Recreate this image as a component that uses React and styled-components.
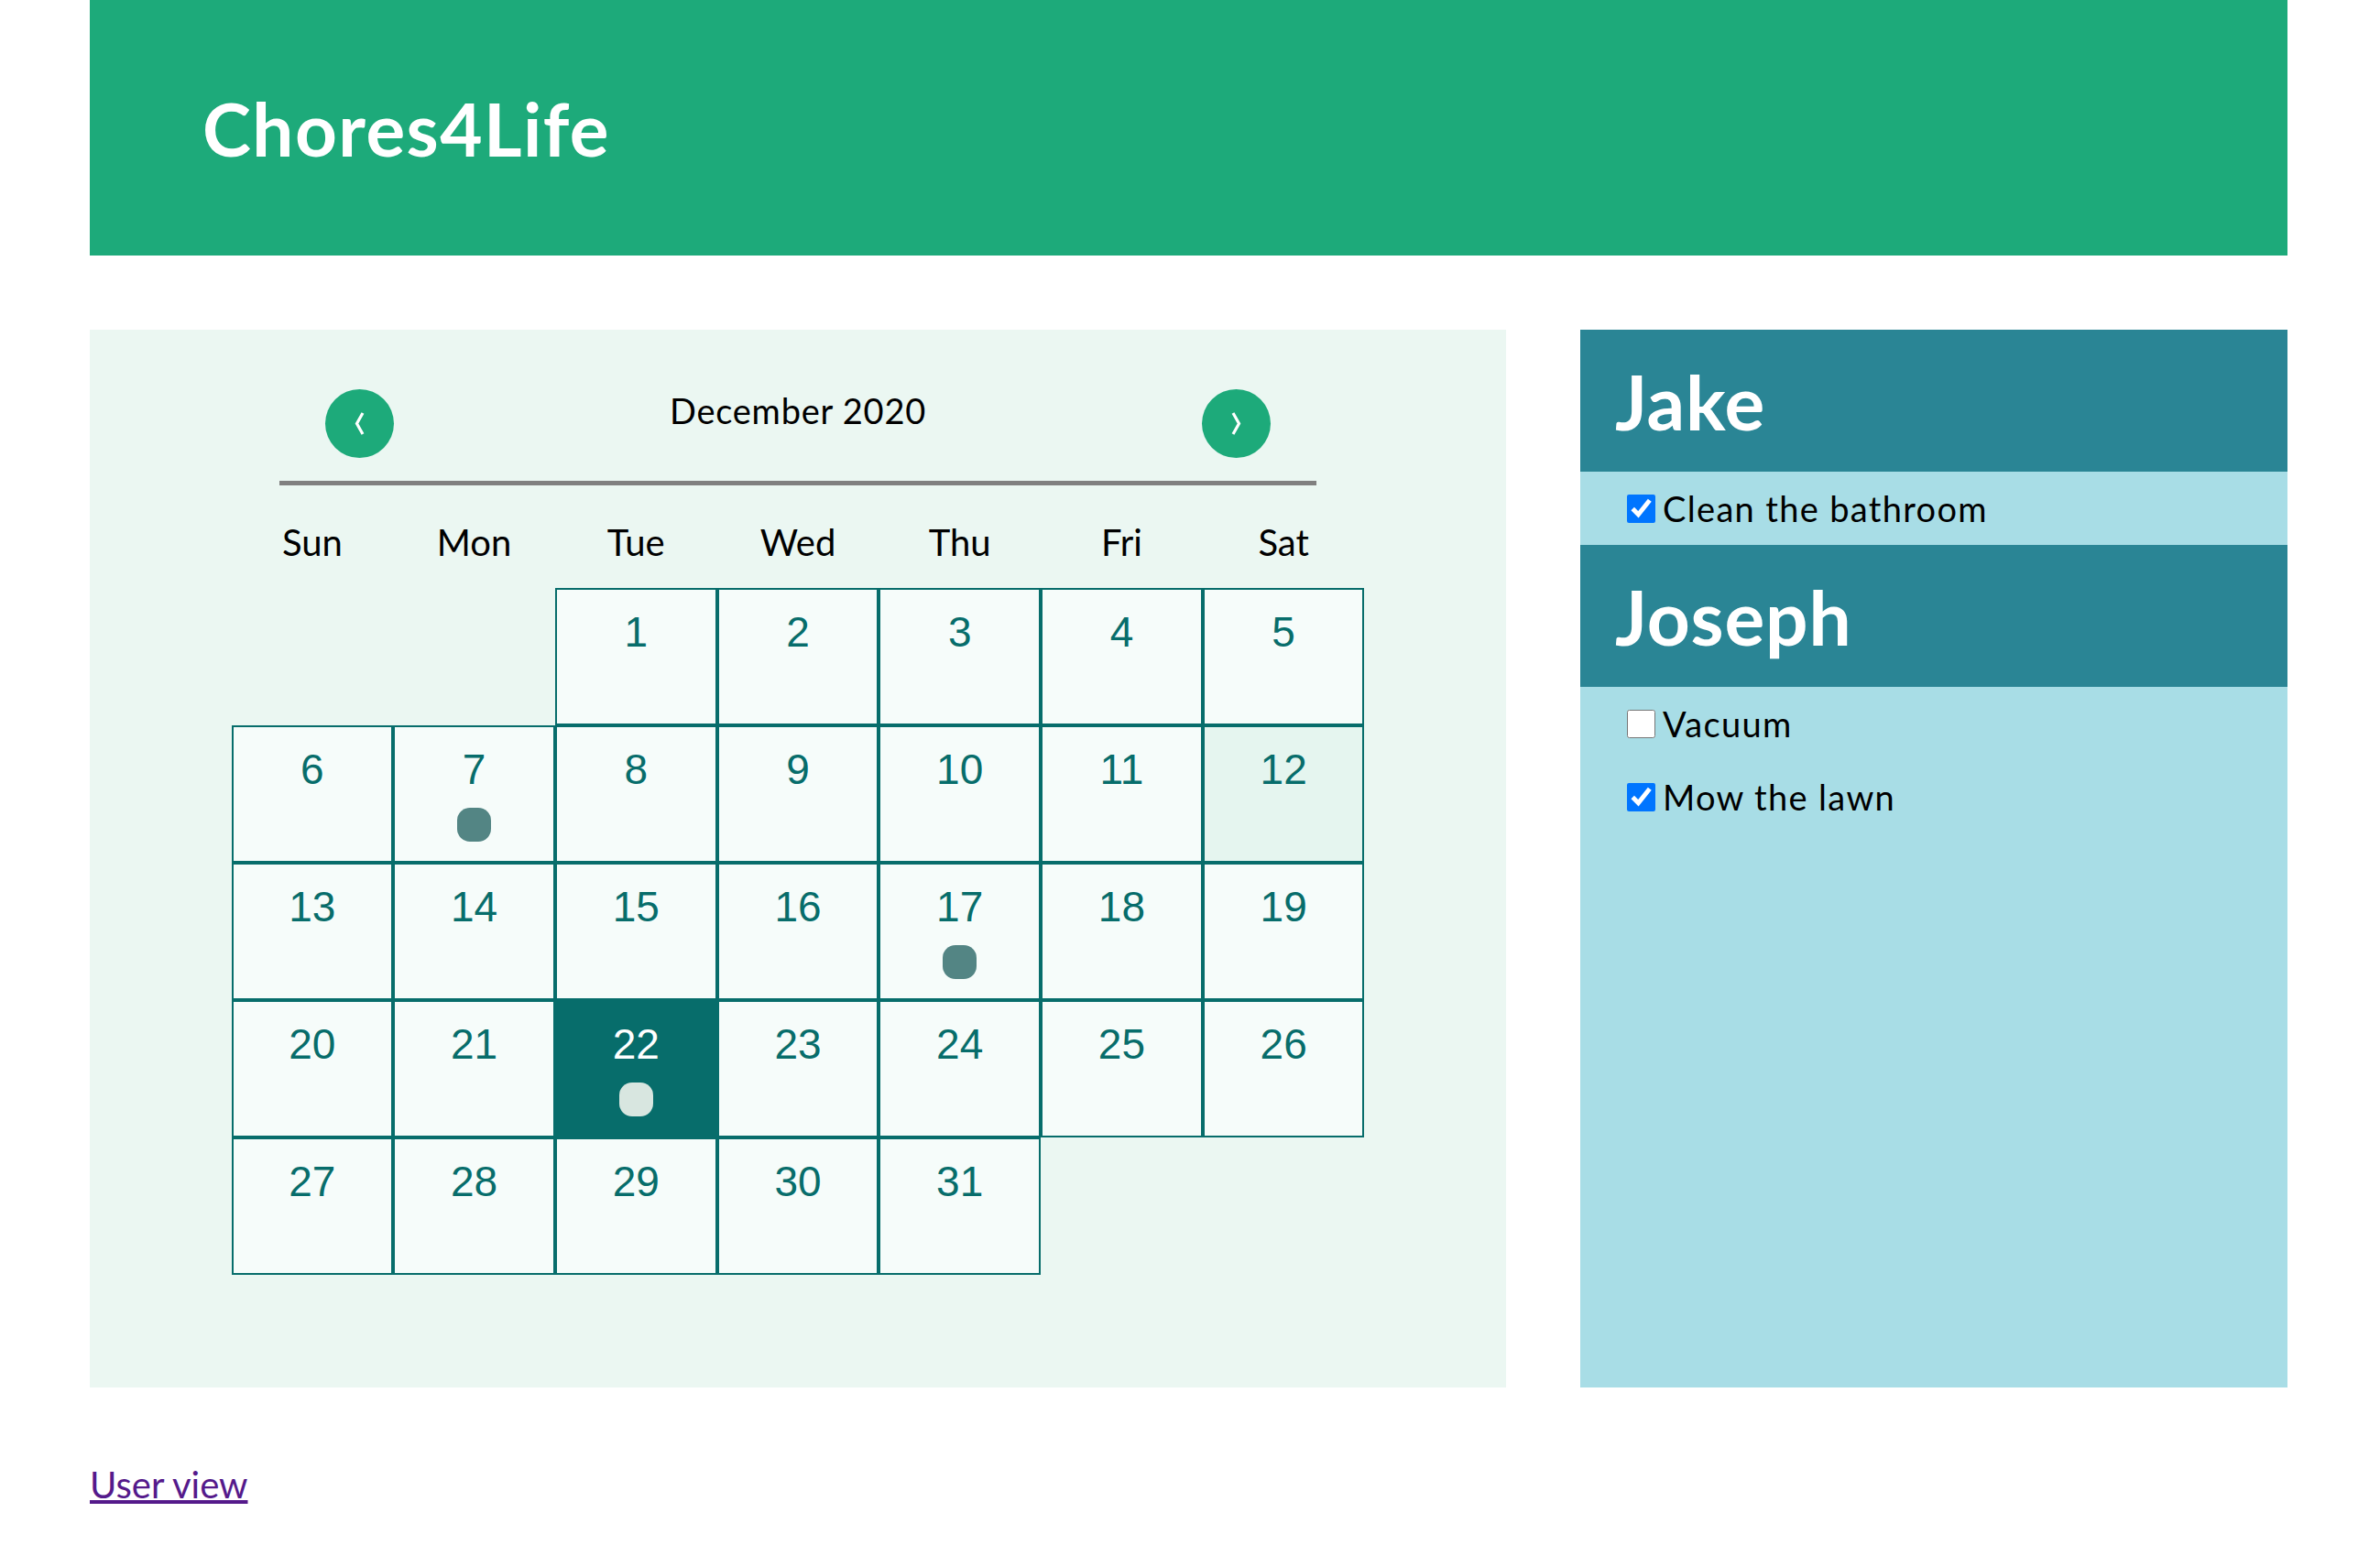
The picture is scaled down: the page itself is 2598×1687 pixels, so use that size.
import styled, { createGlobalStyle } from "styled-components";

const GlobalStyle = createGlobalStyle`
  body {
    margin: 0;
    background: #ffffff;
    font-family: Lato, "Open Sans", sans-serif;
  }
`;

const Page = styled.div`
  width: 2399px;
  padding-left: 98px;
`;

const Header = styled.header`
  height: 279px;
  background: #1daa7a;
  display: flex;
  align-items: center;
  padding-left: 123px;
`;

const Brand = styled.h1`
  margin: 0;
  color: #ffffff;
  font-size: 80px;
  font-weight: 700;
  letter-spacing: 0.018em;
`;

const Main = styled.main`
  margin-top: 81px;
  height: 1155px;
  display: grid;
  grid-template-columns: 1546px 772px;
  gap: 81px;
`;

const CalendarPanel = styled.section`
  background: #ebf7f2;
  padding-top: 65px;
`;

const Nav = styled.div`
  width: 1132px;
  margin: 0 auto;
  padding: 0 50px 25px;
  box-sizing: border-box;
  border-bottom: 5px solid #808080;
  display: flex;
  justify-content: space-between;
  align-items: flex-start;
`;

const NavButton = styled.button`
  width: 75px;
  height: 75px;
  border-radius: 50%;
  border: none;
  background: #1daa7a;
  display: flex;
  align-items: center;
  justify-content: center;
  padding: 0;
  cursor: pointer;
`;

const MonthTitle = styled.div`
  font-size: 38px;
  letter-spacing: 0.02em;
  color: #000000;
`;

const Week = styled.div`
  width: 1237px;
  margin: 38px auto 0;
  display: grid;
  grid-template-columns: repeat(7, 1fr);
`;

const DayName = styled.div`
  text-align: center;
  font-size: 40px;
  color: #000000;
`;

const Grid = styled.div`
  width: 1237px;
  margin: 26px auto 0;
  display: grid;
  grid-template-columns: repeat(7, 1fr);
  grid-auto-rows: 150px;
`;

const Cell = styled.div`
  grid-column-start: ${(p) => p.$start || "auto"};
  border: 2px solid #076d6b;
  background: ${(p) => (p.$selected ? "#076d6b" : p.$today ? "#e5f5ef" : "#f6fcfa")};
  display: flex;
  flex-direction: column;
  align-items: center;
  padding-top: 23px;
`;

const DayNumber = styled.div`
  font-family: "Liberation Sans", Arial, sans-serif;
  font-size: 46px;
  line-height: 1;
  color: ${(p) => (p.$selected ? "#ffffff" : "#076d6b")};
`;

const Dot = styled.div`
  margin-top: 19px;
  width: 37px;
  height: 37px;
  border-radius: 14px;
  background: ${(p) => (p.$selected ? "#d8e6e0" : "#538584")};
`;

const PeoplePanel = styled.section`
  background: #a8dde6;
`;

const PersonName = styled.h2`
  margin: 0;
  height: 155px;
  background: #2a8595;
  color: #ffffff;
  font-size: 82px;
  font-weight: 700;
  letter-spacing: 0.01em;
  display: flex;
  align-items: center;
  padding-left: 38px;
`;

const Task = styled.label`
  height: 80px;
  display: flex;
  align-items: center;
  padding-left: 51px;
  font-size: 38px;
  letter-spacing: 0.035em;
  color: #000000;
`;

const Check = styled.input`
  width: 31px;
  height: 31px;
  margin: 0 8px 0 0;
  accent-color: #0075ff;
`;

const UserLink = styled.a`
  display: inline-block;
  margin-top: 82px;
  font-size: 40px;
  color: #551a8b;
  text-decoration-thickness: 4px;
`;

function Chevron({ dir }) {
  const points = dir === "left" ? "9,1 2.5,12.5 9,24" : "2,1 8.5,12.5 2,24";
  return (
    <svg width="11" height="26" viewBox="0 0 11 26">
      <polyline points={points} fill="none" stroke="#ffffff" strokeWidth="3.2" />
    </svg>
  );
}

const days = ["Sun", "Mon", "Tue", "Wed", "Thu", "Fri", "Sat"];
const dotted = [7, 17, 22];
const selectedDay = 22;
const today = 12;

const people = [
  { name: "Jake", tasks: [{ label: "Clean the bathroom", done: true }] },
  {
    name: "Joseph",
    tasks: [
      { label: "Vacuum", done: false },
      { label: "Mow the lawn", done: true },
    ],
  },
];

export default function App() {
  const cells = [];
  for (let d = 1; d <= 31; d++) {
    const sel = d === selectedDay;
    cells.push(
      <Cell key={d} $start={d === 1 ? 3 : null} $selected={sel} $today={d === today}>
        <DayNumber $selected={sel}>{d}</DayNumber>
        {dotted.includes(d) && <Dot $selected={sel} />}
      </Cell>
    );
  }

  return (
    <>
      <GlobalStyle />
      <Page>
        <Header>
          <Brand>Chores4Life</Brand>
        </Header>
        <Main>
          <CalendarPanel>
            <Nav>
              <NavButton aria-label="Previous month">
                <Chevron dir="left" />
              </NavButton>
              <MonthTitle>December 2020</MonthTitle>
              <NavButton aria-label="Next month">
                <Chevron dir="right" />
              </NavButton>
            </Nav>
            <Week>
              {days.map((d) => (
                <DayName key={d}>{d}</DayName>
              ))}
            </Week>
            <Grid>{cells}</Grid>
          </CalendarPanel>
          <PeoplePanel>
            {people.map((p) => (
              <div key={p.name}>
                <PersonName>{p.name}</PersonName>
                {p.tasks.map((t) => (
                  <Task key={t.label}>
                    <Check type="checkbox" defaultChecked={t.done} />
                    {t.label}
                  </Task>
                ))}
              </div>
            ))}
          </PeoplePanel>
        </Main>
        <UserLink href="#user">User view</UserLink>
      </Page>
    </>
  );
}
